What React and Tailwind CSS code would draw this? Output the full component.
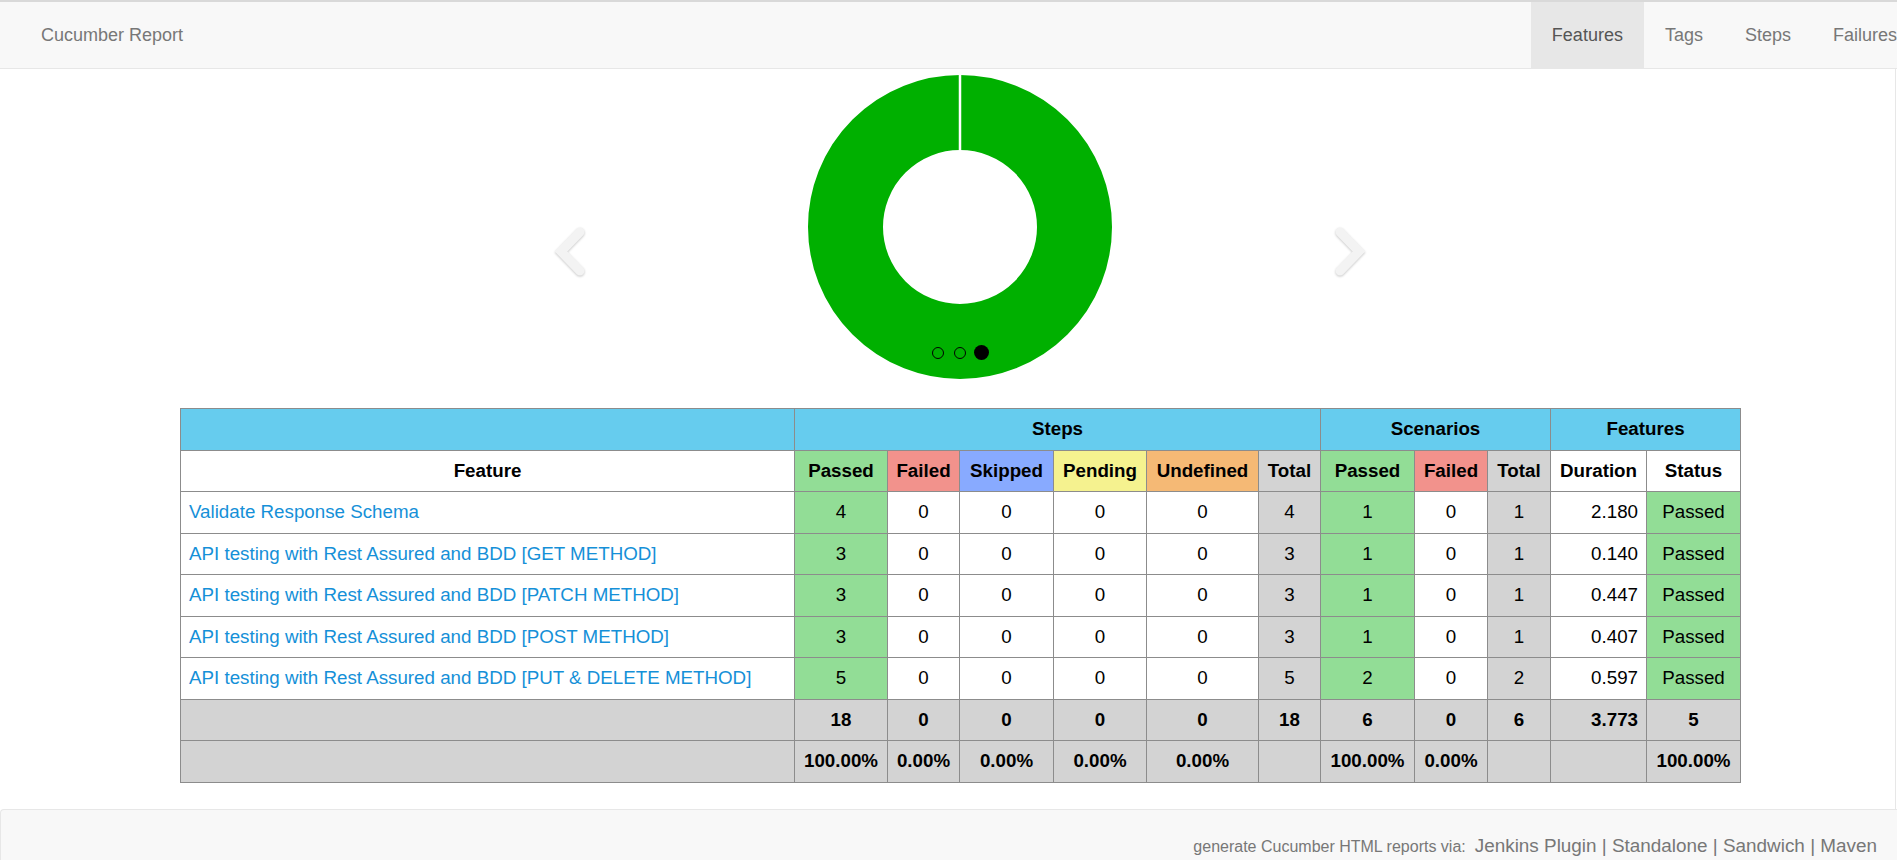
import React from 'react';

const FEATURES = [
  { name: 'Validate Response Schema', steps: [4, 0, 0, 0, 0, 4], scen: [1, 0, 1], duration: '2.180' },
  { name: 'API testing with Rest Assured and BDD [GET METHOD]', steps: [3, 0, 0, 0, 0, 3], scen: [1, 0, 1], duration: '0.140' },
  { name: 'API testing with Rest Assured and BDD [PATCH METHOD]', steps: [3, 0, 0, 0, 0, 3], scen: [1, 0, 1], duration: '0.447' },
  { name: 'API testing with Rest Assured and BDD [POST METHOD]', steps: [3, 0, 0, 0, 0, 3], scen: [1, 0, 1], duration: '0.407' },
  { name: 'API testing with Rest Assured and BDD [PUT & DELETE METHOD]', steps: [5, 0, 0, 0, 0, 5], scen: [2, 0, 2], duration: '0.597' },
];

// step columns: passed, failed, skipped, pending, undefined, total
const STEP_HEAD = [
  { label: 'Passed', bg: 'bg-[#92dd96]' },
  { label: 'Failed', bg: 'bg-[#f2928c]' },
  { label: 'Skipped', bg: 'bg-[#88aaff]' },
  { label: 'Pending', bg: 'bg-[#f5f28f]' },
  { label: 'Undefined', bg: 'bg-[#f5b975]' },
  { label: 'Total', bg: 'bg-[#d3d3d3]' },
];
const STEP_BODY = ['bg-[#92dd96]', 'bg-white', 'bg-white', 'bg-white', 'bg-white', 'bg-[#d3d3d3]'];
const SCEN_BODY = ['bg-[#92dd96]', 'bg-white', 'bg-[#d3d3d3]'];

const cell = 'border border-[#8c8c8c] px-[8px] align-middle';

function Donut() {
  return (
    <svg width="304" height="304" viewBox="0 0 304 304">
      <circle cx="152" cy="152" r="114.5" fill="none" stroke="#00b000" strokeWidth="75" />
      <line x1="152" y1="0" x2="152" y2="76" stroke="#ffffff" strokeWidth="2.5" />
    </svg>
  );
}

function Chevron({ dir }) {
  const pts = dir === 'left' ? '27,6 8,25.5 27,45' : '7,6 26,25.5 7,45';
  return (
    <svg width="34" height="51" viewBox="0 0 34 51" className="drop-shadow-[0_1px_1px_rgba(0,0,0,0.22)]">
      <polyline points={pts} fill="none" stroke="#f3f3f3" strokeWidth="9" strokeLinecap="round" strokeLinejoin="miter" />
    </svg>
  );
}

export default function App() {
  return (
    <div className="w-screen h-screen overflow-hidden bg-white font-['Liberation_Sans',Arial,sans-serif]">
      <div className="w-[1920px]">
        {/* navbar */}
        <div className="flex h-[69px] border-t-2 border-b border-t-[#d9d9d9] border-b-[#e7e7e7] bg-[#f8f8f8] text-[18px] text-[#777]">
          <div className="flex items-center pl-[41px]">Cucumber Report</div>
          <ul className="ml-auto mr-[2px] flex">
            <li className="flex items-center px-[21px] bg-[#e7e7e7] text-[#555]">Features</li>
            <li className="flex items-center px-[21px]">Tags</li>
            <li className="flex items-center px-[21px]">Steps</li>
            <li className="flex items-center px-[21px]">Failures</li>
          </ul>
        </div>

        <div className="w-[1896px] h-[740px] border-r border-[#e7e7e7]">
          {/* chart carousel */}
          <div className="relative ml-[180px] w-[1560px] h-[339px]">
            <div className="flex justify-center pt-[6px]">
              <Donut />
            </div>
            <div className="absolute left-[373px] top-[157px]">
              <Chevron dir="left" />
            </div>
            <div className="absolute right-[373px] top-[157px]">
              <Chevron dir="right" />
            </div>
            <div className="absolute left-[752px] top-[276px] flex items-center">
              <span className="w-[12px] h-[12px] rounded-full border border-black" />
              <span className="ml-[10px] w-[12px] h-[12px] rounded-full border border-black" />
              <span className="ml-[8px] w-[15px] h-[15px] rounded-full bg-black" />
            </div>
          </div>

          {/* stats table */}
          <table className="ml-[180px] w-[1560px] table-fixed border-collapse border border-[#8c8c8c] text-[18.75px] text-black">
            <colgroup>
              <col className="w-[614px]" />
              <col className="w-[93px]" />
              <col className="w-[72px]" />
              <col className="w-[94px]" />
              <col className="w-[93px]" />
              <col className="w-[112px]" />
              <col className="w-[62px]" />
              <col className="w-[94px]" />
              <col className="w-[73px]" />
              <col className="w-[63px]" />
              <col className="w-[96px]" />
              <col className="w-[94px]" />
            </colgroup>
            <thead>
              <tr className="h-[41.5px] bg-[#66ccee] font-bold">
                <th className={cell} />
                <th className={cell} colSpan={6}>Steps</th>
                <th className={cell} colSpan={3}>Scenarios</th>
                <th className={cell} colSpan={2}>Features</th>
              </tr>
              <tr className="h-[41.5px] font-bold">
                <th className={`${cell} bg-white`}>Feature</th>
                {STEP_HEAD.map((h, i) => (
                  <th key={'s' + i} className={`${cell} ${h.bg}`}>{h.label}</th>
                ))}
                <th className={`${cell} bg-[#92dd96]`}>Passed</th>
                <th className={`${cell} bg-[#f2928c]`}>Failed</th>
                <th className={`${cell} bg-[#d3d3d3]`}>Total</th>
                <th className={`${cell} bg-white`}>Duration</th>
                <th className={`${cell} bg-white`}>Status</th>
              </tr>
            </thead>
            <tbody>
              {FEATURES.map((f) => (
                <tr key={f.name} className="h-[41.5px]">
                  <td className={`${cell} bg-white text-left whitespace-nowrap`}>
                    <a href="#" className="text-[#1590d8]">{f.name}</a>
                  </td>
                  {f.steps.map((v, i) => (
                    <td key={'s' + i} className={`${cell} ${STEP_BODY[i]} text-center`}>{v}</td>
                  ))}
                  {f.scen.map((v, i) => (
                    <td key={'c' + i} className={`${cell} ${SCEN_BODY[i]} text-center`}>{v}</td>
                  ))}
                  <td className={`${cell} bg-white text-right`}>{f.duration}</td>
                  <td className={`${cell} bg-[#92dd96] text-center`}>Passed</td>
                </tr>
              ))}
            </tbody>
            <tfoot className="bg-[#d3d3d3] font-bold">
              <tr className="h-[41.5px] text-center">
                <td className={cell} />
                <td className={cell}>18</td>
                <td className={cell}>0</td>
                <td className={cell}>0</td>
                <td className={cell}>0</td>
                <td className={cell}>0</td>
                <td className={cell}>18</td>
                <td className={cell}>6</td>
                <td className={cell}>0</td>
                <td className={cell}>6</td>
                <td className={`${cell} text-right`}>3.773</td>
                <td className={cell}>5</td>
              </tr>
              <tr className="h-[41.5px] text-center">
                <td className={cell} />
                <td className={cell}>100.00%</td>
                <td className={cell}>0.00%</td>
                <td className={cell}>0.00%</td>
                <td className={cell}>0.00%</td>
                <td className={cell}>0.00%</td>
                <td className={cell} />
                <td className={cell}>100.00%</td>
                <td className={cell}>0.00%</td>
                <td className={cell} />
                <td className={cell} />
                <td className={cell}>100.00%</td>
              </tr>
            </tfoot>
          </table>
        </div>

        {/* footer */}
        <div className="h-[80px] rounded-tl-[4px] border-t border-l border-[#e7e7e7] bg-[#f8f8f8] pr-[43px] pt-[22px] flex justify-end items-baseline text-[#777]">
          <span className="text-[16px]">generate Cucumber HTML reports via:</span>
          <span className="ml-[9px] text-[18.9px]">
            <a href="#" className="text-[#777]">Jenkins Plugin</a> | <a href="#" className="text-[#777]">Standalone</a> | <a href="#" className="text-[#777]">Sandwich</a> | <a href="#" className="text-[#777]">Maven</a>
          </span>
        </div>
      </div>
    </div>
  );
}
